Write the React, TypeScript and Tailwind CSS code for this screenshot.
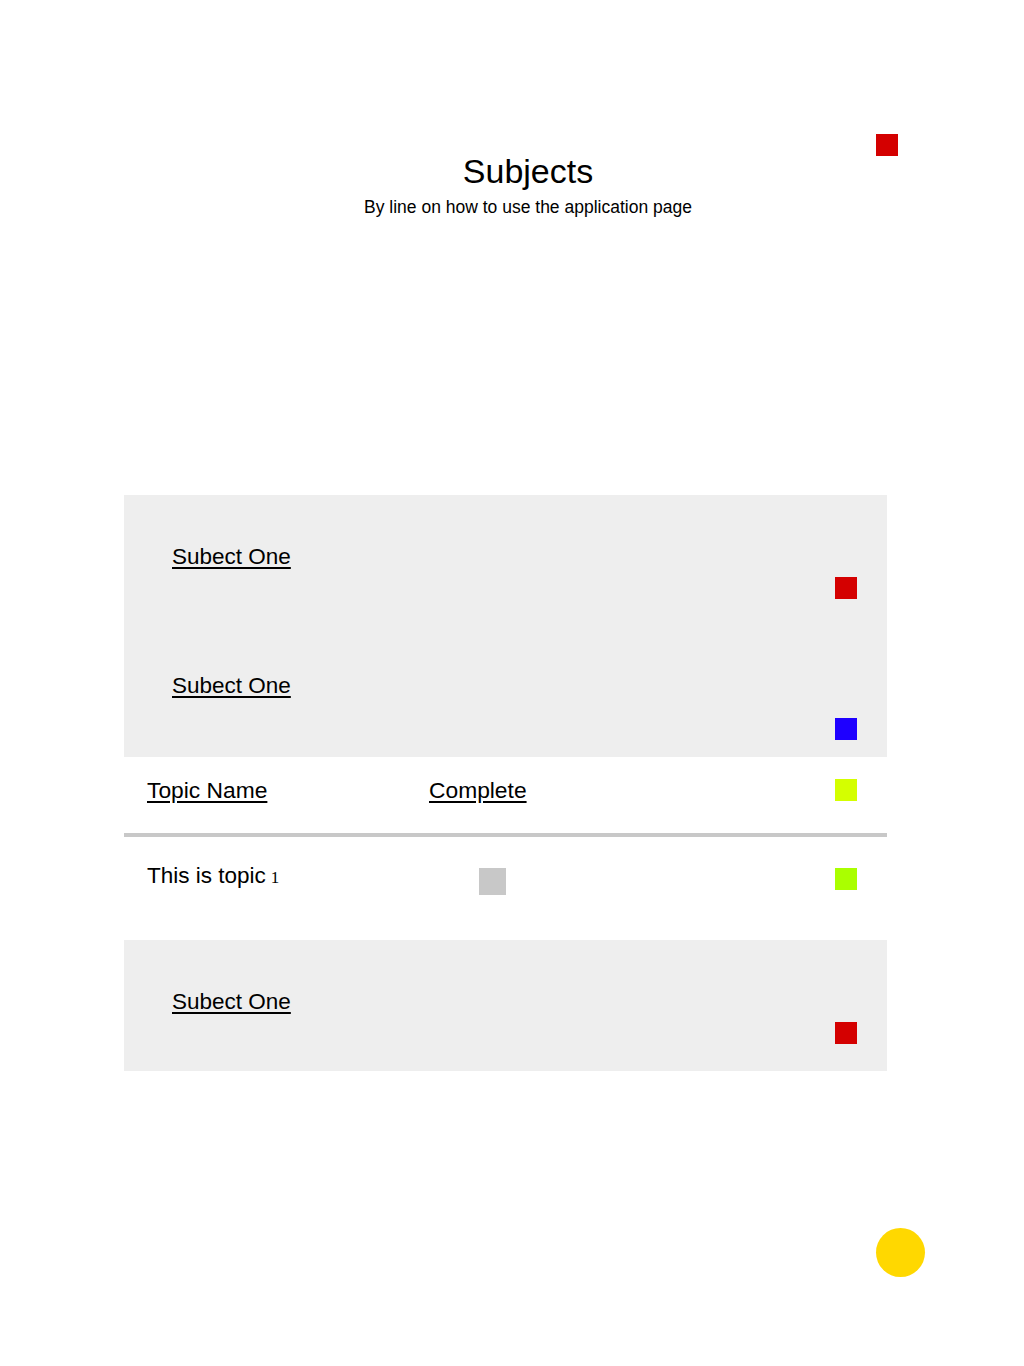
const Swatch = ({ color }: { color: string }) => (
  <span className={`block h-[22px] w-[22px] shrink-0 ${color}`} />
);

const SubjectItem = ({
  top,
  gap,
  bottom,
  color,
}: {
  top: string;
  gap: string;
  bottom: string;
  color: string;
}) => (
  <div className={`pl-[48px] pr-[30px] ${top} ${bottom}`}>
    <a href="#" className="block w-fit text-[22.5px] leading-[22px] underline underline-offset-[3px]">
      Subect One
    </a>
    <div className={`flex justify-end ${gap}`}>
      <Swatch color={color} />
    </div>
  </div>
);

export default function App() {
  return (
    <div className="relative min-h-[1366px] bg-white font-['Liberation_Sans',Arial,sans-serif] text-black">
      <header className="relative ml-[124px] w-[808px] pt-[154px] text-center">
        <h1 className="text-[34px] leading-none">Subjects</h1>
        <p className="mt-[9px] text-[17.5px] leading-[21px]">By line on how to use the application page</p>
        <span className="absolute left-[752px] top-[134px] h-[22px] w-[22px] bg-[#d40000]" />
      </header>

      <main className="ml-[124px] mt-[277px] w-[763px]">
        <section className="bg-[#eeeeee]">
          <SubjectItem top="pt-[51px]" gap="mt-[9px]" bottom="pb-[27px]" color="bg-[#d40000]" />
          <SubjectItem top="pt-[49px]" gap="mt-[21px]" bottom="pb-[17px]" color="bg-[#1e00ff]" />
        </section>

        <div className="flex h-[80px] items-start border-b-[4px] border-[#c8c8c8] pl-[23px] pr-[30px] pt-[22px]">
          <a href="#" className="w-[282px] text-[22.8px] leading-[22px] underline underline-offset-[3px]">
            Topic Name
          </a>
          <a href="#" className="text-[22.8px] leading-[22px] underline underline-offset-[3px]">
            Complete
          </a>
          <span className="ml-auto">
            <Swatch color="bg-[#d4ff00]" />
          </span>
        </div>

        <div className="flex h-[103px] items-start pl-[23px] pr-[30px] pt-[28px]">
          <p className="w-[332px] text-[22.5px] leading-[22px]">
            This is topic<span className="ml-[5px] font-['Liberation_Serif',serif] text-[17px]">1</span>
          </p>
          <span className="mt-[3px] block h-[27px] w-[27px] bg-[#c8c8c8]" />
          <span className="ml-auto mt-[3px]">
            <Swatch color="bg-[#aaff00]" />
          </span>
        </div>

        <section className="bg-[#eeeeee]">
          <SubjectItem top="pt-[51px]" gap="mt-[9px]" bottom="pb-[27px]" color="bg-[#d40000]" />
        </section>
      </main>

      <button className="absolute left-[876px] top-[1228px] h-[49px] w-[49px] rounded-full bg-[#ffd800]" aria-label="Add" />
    </div>
  );
}
